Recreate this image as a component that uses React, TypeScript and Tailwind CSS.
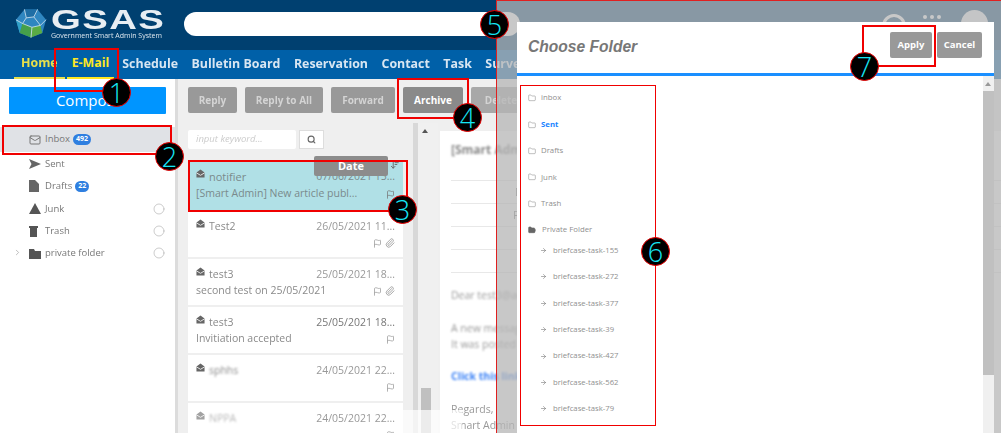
import React from "react";
import { Mail, Folder, FolderOpen, Flag, Paperclip, Search, ChevronRight, ArrowRight, ArrowDownWideNarrow, Circle } from "lucide-react";

const Logo = () => (
  <svg width="32" height="31" viewBox="0 0 34 32" className="shrink-0 mt-[8px]">
    <polygon points="10,1 24,1 33,12 29,26 17,31 5,26 1,12" fill="#2f86c0" />
    <polygon points="1,12 8,16 5,26" fill="#30a0c8" />
    <polygon points="5,26 17,31 18,20 8,16" fill="#45a04a" />
    <polygon points="18,20 17,31 29,26 27,18" fill="#5aac44" />
    <polygon points="10,1 24,1 20,9 12,10" fill="#1f6ea5" />
    <g stroke="#d5e6f0" strokeWidth="1" fill="none" opacity="0.85">
      <path d="M12 10 L20 9 L27 18 L18 20 L8 16 Z M12 10 L10 1 M20 9 L24 1 M27 18 L33 12 M18 20 L17 31 M8 16 L1 12" />
    </g>
  </svg>
);

const Marker = ({ n, className }: { n: number; className: string }) => (
  <div className={`absolute w-[29px] h-[29px] rounded-full bg-black border border-[#e00] flex items-center justify-center text-[#16e6f5] text-[27px] font-light leading-none z-40 font-['Open_Sans',sans-serif] ${className}`}>
    {n}
  </div>
);

const Box = ({ className }: { className: string }) => (
  <div className={`absolute border-2 border-[#f00000] z-30 pointer-events-none ${className}`} />
);

const EnvOpen = () => (
  <svg width="9" height="9" viewBox="0 0 10 10" className="-mt-[8px] shrink-0">
    <path d="M0.5 4 L5 0.5 L9.5 4 V9.5 H0.5 Z" fill="#666" />
    <path d="M0.5 4.3 L5 7 L9.5 4.3" fill="none" stroke="#fff" strokeWidth="0.9" />
  </svg>
);

const navItems = ["Schedule", "Bulletin Board", "Reservation", "Contact", "Task", "Survey"];

const MailRow = ({ from, date, subject, blur, attach, faint, dark }: { from: string; date: string; subject: string; blur: string; attach?: boolean; faint?: boolean; dark?: boolean }) => (
  <div className="bg-white mb-[2px] h-[46px] shrink-0 px-[8px] pt-[6px] text-[10.5px] text-[#8a8a8a]">
    <div className="flex items-center justify-between h-[20px]">
      <div className={`flex items-center gap-[4px] ${faint ? "opacity-60" : ""}`}>
        <EnvOpen />
        <span className={blur}>{from}</span>
      </div>
      <span className={dark ? "text-[#777] blur-[0.3px]" : "blur-[0.6px] text-[#999]"}>{date}</span>
    </div>
    <div className="flex items-center justify-between h-[12px]">
      <span className={`${blur} truncate`}>{subject}</span>
      <div className="flex items-center gap-[3px] text-[#999] blur-[0.5px]">
        <Flag size={9} />
        {attach && <Paperclip size={10} />}
      </div>
    </div>
  </div>
);

const SendIcon = () => (
  <svg width="12" height="10" viewBox="0 0 12 10"><path d="M0 0 L12 5 L0 10 L2.5 5 Z" fill="#666" /></svg>
);
const DraftIcon = () => (
  <svg width="10" height="12" viewBox="0 0 10 12"><path d="M0 0 H6 L10 4 V12 H0 Z" fill="#666" /></svg>
);
const JunkIcon = () => (
  <svg width="12" height="11" viewBox="0 0 12 11"><path d="M6 0 L12 11 H0 Z" fill="#555" /></svg>
);
const TrashIcon = () => (
  <svg width="9" height="11" viewBox="0 0 9 11"><path d="M0 0 H9 V2 H8 V11 H1 V2 H0 Z" fill="#555" /></svg>
);
const FolderIcon = () => (
  <svg width="12" height="11" viewBox="0 0 12 11"><path d="M0 1 H5 L6 3 H12 V11 H0 Z" fill="#555" /></svg>
);

const SideRow = ({ icon, label, badge, radio, active }: { icon: React.ReactNode; label: string; badge?: string; radio?: boolean; active?: boolean }) => (
  <div className={`flex items-center pl-[29px] pr-[10px] text-[9.5px] text-[#777] ${active ? "bg-[#e0e2e6] h-[25px]" : "h-[22.3px]"}`}>
    <span className={`w-[16px] flex items-center shrink-0 ${active ? "" : "blur-[0.4px]"}`}>{icon}</span>
    <span className={active ? "" : "blur-[0.7px]"}>{label}</span>
    {badge && <span className="ml-[3px] px-[3px] h-[11px] rounded-full bg-[#2f7fe0] text-white text-[7px] font-bold flex items-center">{badge}</span>}
    {radio && <Circle size={12} className="ml-auto text-[#aaa]" strokeWidth={1.2} />}
  </div>
);

const ModalItem = ({ label, active }: { label: string; active?: boolean }) => (
  <div className="flex items-center h-[26.4px] pl-[11px] gap-[5px] text-[7.8px] text-[#8f8f8f]">
    <Folder size={8} strokeWidth={1.4} className="text-[#777]" />
    <span className={active ? "text-[#1a85ff] font-bold" : ""}>{label}</span>
  </div>
);

const TaskItem = ({ label }: { label: string }) => (
  <div className="flex items-center h-[26.4px] pl-[23px] gap-[6px] text-[7.7px] text-[#8f8f8f] whitespace-nowrap">
    <ArrowRight size={7} className="text-[#777]" />
    <span>{label}</span>
  </div>
);

export default function App() {
  return (
    <div className="relative w-[1001px] h-[433px] overflow-hidden bg-white font-['Open_Sans',sans-serif]">
      <div className="h-[50px] bg-[#004070] flex items-start pl-[15px]">
        <Logo />
        <div className="ml-[4px] pt-[9px] flex flex-col w-[116px]">
          <span className="font-['Liberation_Sans',sans-serif] text-[#e8eef3] font-bold text-[27px] leading-[22px] tracking-[1px] scale-x-[1.42] origin-left blur-[0.3px]">GSAS</span>
          <span className="text-[#dbe6ee] text-[7px] leading-[9px] whitespace-nowrap blur-[0.2px]">Government Smart Admin System</span>
        </div>
        <div className="ml-[17px] mt-[12px] w-[336px] h-[24px] rounded-full bg-white" />
        <div className="ml-auto flex items-start pr-[13px]">
          <div className="mt-[14px] w-[24px] h-[24px] rounded-full border-[3px] border-white blur-[0.5px]" />
          <div className="ml-[17px] mt-[15px] flex gap-[3px] blur-[0.4px]">
            <i className="w-[4px] h-[4px] rounded-full bg-white" />
            <i className="w-[4px] h-[4px] rounded-full bg-white" />
            <i className="w-[4px] h-[4px] rounded-full bg-white" />
          </div>
          <div className="ml-[20px] mt-[10px] w-[27px] h-[27px] rounded-full bg-[#f0f4f6]" />
        </div>
      </div>
      <div className="h-[29px] bg-[#0060a8] flex items-stretch pl-[14px] text-[12.4px] font-bold text-[#d8e6f2]">
        <div className="px-[7px] flex items-center text-[#e8e04a] border-b-2 border-[#e8e04a] blur-[0.6px]">Home</div>
        <div className="ml-[2px] px-[5px] flex items-center text-[#ffe81f] border-b-2 border-[#ffe81f]">E-Mail</div>
        <div className="flex items-center gap-[13.5px] ml-[8px] blur-[0.6px] whitespace-nowrap">
          {navItems.map((n) => <span key={n}>{n}</span>)}
        </div>
      </div>
      <div className="flex h-[354px]">
        <aside className="w-[178px] bg-white shrink-0 pt-[8px] border-r-[3px] border-[#dcdcdc]">
          <div className="mx-[9px] w-[157px] h-[27px] bg-[#0095ff] text-white text-[15px] flex items-center justify-center rounded-[1px] pl-[3px]">Compose</div>
          <div className="h-[13px]" />
          <SideRow active icon={<Mail size={12} />} label="Inbox" badge="492" />
          <div className="h-[1px]" />
          <SideRow icon={<SendIcon />} label="Sent" />
          <SideRow icon={<DraftIcon />} label="Drafts" badge="22" />
          <SideRow icon={<JunkIcon />} label="Junk" radio />
          <SideRow icon={<TrashIcon />} label="Trash" radio />
          <div className="relative">
            <ChevronRight size={9} className="absolute left-[13px] top-[6px] text-[#aaa]" />
            <SideRow icon={<FolderIcon />} label="private folder" radio />
          </div>
        </aside>
        <main className="flex-1 bg-[#efefef] flex flex-col min-w-0 pl-[10px] relative">
          <div className="flex gap-[8px] pt-[8px] h-[44px] text-[10px] font-bold text-[#d4d4d4] shrink-0">
            {[["Reply", "w-[49px]"], ["Reply to All", "w-[78px]"], ["Forward", "w-[64px]"]].map(([t, w]) => (
              <div key={t} className={`h-[26px] rounded-[2px] bg-[#999] flex items-center justify-center ${w}`}><span className="blur-[0.6px]">{t}</span></div>
            ))}
            <div className="h-[26px] w-[60px] rounded-[2px] bg-[#8a8a8a] text-white flex items-center justify-center">Archive</div>
            <div className="h-[26px] w-[60px] rounded-[2px] bg-[#a8a8a8] flex items-center justify-center"><span className="blur-[0.6px]">Delete</span></div>
          </div>
          <div className="flex flex-1 min-h-0">
            <div className="w-[215px] flex flex-col">
              <div className="flex items-center gap-[3px] h-[36px] pb-[4px] shrink-0">
                <div className="w-[108px] h-[19px] bg-white rounded-[2px] pl-[8px] text-[9.5px] italic text-[#ccc] flex items-center blur-[0.5px]">input keyword...</div>
                <div className="w-[25px] h-[19px] bg-white border border-[#ddd] flex items-center justify-center"><Search size={9} className="text-[#666]" strokeWidth={3} /></div>
              </div>
              <div className="relative bg-[#b0e0e6] mt-[1px] h-[51px] px-[8px] pt-[7px] text-[10.5px] text-[#7a8a8c] shrink-0">
                <div className="flex items-center justify-between h-[20px]">
                  <div className="flex items-center gap-[4px]"><EnvOpen /><span className="text-[11px]">notifier</span></div>
                  <span>07/06/2021 15...</span>
                </div>
                <div className="flex items-center justify-between h-[14px]">
                  <span className="truncate">[Smart Admin] New article publ...</span>
                  <Flag size={9} className="text-[#777]" />
                </div>
              </div>
              <MailRow from="Test2" date="26/05/2021 11..." subject="" blur="blur-[0.5px]" attach />
              <MailRow from="test3" date="25/05/2021 18..." subject="second test on 25/05/2021" blur="blur-[0.7px]" attach />
              <MailRow from="test3" date="25/05/2021 18..." subject="Invitiation accepted" blur="blur-[0.7px]" dark />
              <MailRow from="sphhs" date="24/05/2021 22..." subject="" blur="blur-[1px]" />
              <MailRow from="NPPA" date="24/05/2021 22..." subject="" blur="blur-[1px]" faint />
            </div>
            <div className="w-[5px] ml-[10px] bg-[#d8d8d8] shrink-0" />
            <div className="w-[20px] bg-[#f0f0f0] relative shrink-0">
              <div className="absolute left-[4px] top-[6px] w-0 h-0 border-x-[3px] border-x-transparent border-b-[4px] border-b-[#555]" />
              <div className="absolute left-[3px] top-[265px] w-[10px] h-[45px] bg-[#c0c0c0]" />
            </div>
            <div className="flex-1 ml-[2px] mt-[8px] bg-white pl-[11px] text-[10.5px] leading-[16px] text-[#999] whitespace-nowrap overflow-hidden min-w-0">
              <div className="font-bold text-[12px] mt-[11px] mb-[22px] blur-[1px] text-[#888]">[Smart Admin] New article published</div>
              <div className="border-t border-[#e8e8e8] h-[23px] pl-[64px] pt-[3px] text-[#777] blur-[0.5px]">Date</div>
              <div className="border-t border-[#e8e8e8] h-[23px] pl-[62px] pt-[3px] text-[#777] blur-[0.5px]">From</div>
              <div className="border-t border-[#e8e8e8] h-[23px]" />
              <div className="border-t border-[#e8e8e8] h-[23px]" />
              <div className="border-t border-[#e8e8e8] h-[15px]" />
              <div className="blur-[1px]">Dear test3@admin.gov,</div>
              <div className="blur-[1px] mt-[17px]">A new message has been</div>
              <div className="blur-[1px]">It was posted on</div>
              <div className="blur-[1px] mt-[16px] text-[#3b82f6] font-bold">Click this link</div>
              <div className="blur-[0.7px] mt-[17px]">Regards,</div>
              <div className="blur-[0.7px]">Smart Admin</div>
            </div>
          </div>
          <div className="absolute left-[225px] top-[331px] w-[59px] h-[23px] bg-white/70" />
        </main>
      </div>

      {/* dimmed right-hand part, with the dialog over it */}
      <div className="absolute left-[496px] top-0 right-0 bottom-0 z-10 bg-[rgba(181,181,181,0.75)] border-l border-t border-[#e02020]" />
      <div className="absolute left-[517px] top-[22px] right-[7px] bottom-0 bg-white z-20 flex flex-col">
        <div className="flex items-start border-b-[3px] border-[#1a8fff] h-[54px] shrink-0">
          <div className="pl-[11px] pt-[15px] text-[#777] font-['Liberation_Sans',sans-serif] italic font-bold text-[15.6px] leading-[20px]">Choose Folder</div>
          <div className="ml-auto flex gap-[5px] pt-[10px] pr-[12px] text-[9.5px] font-bold text-white">
            <div className="w-[42px] h-[26px] rounded-[2px] bg-[#999] flex items-center justify-center">Apply</div>
            <div className="w-[45px] h-[26px] rounded-[2px] bg-[#999] flex items-center justify-center">Cancel</div>
          </div>
        </div>
        <div className="flex flex-1 min-h-0">
          <div className="flex-1 pt-[9px] overflow-hidden">
            <ModalItem label="inbox" />
            <ModalItem label="Sent" active />
            <ModalItem label="Drafts" />
            <ModalItem label="Junk" />
            <ModalItem label="Trash" />
            <div className="flex items-center h-[26.4px] pl-[11px] gap-[6px] text-[7.8px] text-[#8f8f8f]">
              <FolderOpen size={8} fill="#666" className="text-[#666]" />
              <span>Private Folder</span>
            </div>
            <div className="-mt-[6px]">
              {["155", "272", "377", "39", "427", "562", "79", "814"].map((n) => <TaskItem key={n} label={`briefcase-task-${n}`} />)}
            </div>
          </div>
          <div className="w-[11px] bg-[#f0f0f0] relative shrink-0">
            <div className="absolute left-[2px] top-[6px] w-0 h-0 border-x-[3.5px] border-x-transparent border-b-[4px] border-b-[#999]" />
            <div className="absolute left-0 right-0 top-[15px] h-[284px] bg-[#c0c0c0]" />
          </div>
        </div>
      </div>

      <Box className="left-[54px] top-[48px] w-[65px] h-[44px]" />
      <Box className="left-[2px] top-[125px] w-[170px] h-[30px]" />
      <Box className="left-[188px] top-[160px] w-[220px] h-[52px]" />
      <Box className="left-[397px] top-[78px] w-[72px] h-[41px]" />
      <div className="absolute left-[520px] top-[85px] w-[136px] h-[341px] border border-[#f00000] z-30" />
      <Box className="left-[862px] top-[25px] w-[74px] h-[42px]" />

      <div className="absolute left-[314px] top-[156px] w-[74px] h-[20px] rounded-[2px] bg-[#8c8c8c] text-white text-[11px] font-bold flex items-center justify-center z-20">Date</div>
      <ArrowDownWideNarrow size={11} className="absolute left-[390px] top-[159px] text-[#666] z-20" />

      <Marker n={1} className="left-[102px] top-[78px]" />
      <Marker n={2} className="left-[155px] top-[142px]" />
      <Marker n={3} className="left-[388px] top-[195px]" />
      <Marker n={4} className="left-[453px] top-[103px]" />
      <Marker n={5} className="left-[480px] top-[10px]" />
      <Marker n={6} className="left-[641px] top-[237px]" />
      <Marker n={7} className="left-[850px] top-[52px]" />
    </div>
  );
}
